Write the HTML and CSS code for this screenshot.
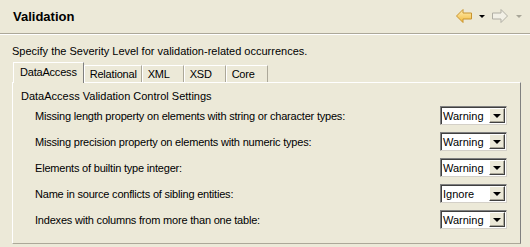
FILE: index.html
```html
<!DOCTYPE html>
<html>
<head>
<meta charset="utf-8">
<link rel="stylesheet" href="styles.css">
</head>
<body>
<div class="header">
  <div class="title">Validation</div>
  <div class="nav">
    <svg class="arrow" width="16" height="14" viewBox="0 0 16 14">
      <defs>
        <linearGradient id="gy" x1="0" y1="0" x2="0" y2="1">
          <stop offset="0" stop-color="#FFF0B8"/>
          <stop offset="1" stop-color="#F2B838"/>
        </linearGradient>
      </defs>
      <path d="M0.5 7 L7 0.5 V4 H15.5 V10 H7 V13.5 Z" fill="url(#gy)" stroke="#C89430" stroke-linejoin="round"/>
    </svg>
    <span class="drop dark"></span>
    <svg class="arrow" width="16" height="14" viewBox="0 0 16 14">
      <path d="M15.5 7 L9 0.5 V4 H0.5 V10 H9 V13.5 Z" fill="#F2F0E6" stroke="#B0AEA4" stroke-linejoin="round"/>
    </svg>
    <span class="drop light"></span>
  </div>
</div>
<div class="sep"></div>
<div class="content">
  <p class="desc">Specify the Severity Level for validation-related occurrences.</p>
  <div class="tabs">
    <div class="tab active">DataAccess</div>
    <div class="tab">Relational</div>
    <div class="tab">XML</div>
    <div class="tab">XSD</div>
    <div class="tab">Core</div>
  </div>
  <div class="panel">
    <div class="group">DataAccess Validation Control Settings</div>
    <div class="row"><span class="label">Missing length property on elements with string or character types:</span><div class="combo"><span class="value">Warning</span><span class="btn"><span class="tri"></span></span></div></div>
    <div class="row"><span class="label">Missing precision property on elements with numeric types:</span><div class="combo"><span class="value">Warning</span><span class="btn"><span class="tri"></span></span></div></div>
    <div class="row"><span class="label">Elements of builtin type integer:</span><div class="combo"><span class="value">Warning</span><span class="btn"><span class="tri"></span></span></div></div>
    <div class="row"><span class="label">Name in source conflicts of sibling entities:</span><div class="combo"><span class="value">Ignore</span><span class="btn"><span class="tri"></span></span></div></div>
    <div class="row"><span class="label">Indexes with columns from more than one table:</span><div class="combo"><span class="value">Warning</span><span class="btn"><span class="tri"></span></span></div></div>
  </div>
</div>
</body>
</html>
```

FILE: styles.css
```css
html, body {
  margin: 0;
  padding: 0;
  background: #ECE9D8;
  width: 530px;
  height: 247px;
  overflow: hidden;
  font-family: "Liberation Sans", Arial, sans-serif;
  font-size: 11px;
  color: #000;
}

.header {
  height: 33px;
  display: flex;
  align-items: center;
  justify-content: space-between;
  padding: 0 8px 0 13px;
  box-sizing: border-box;
}

.title {
  font-weight: bold;
  font-size: 13px;
  margin-top: -1px;
}

.nav {
  display: flex;
  align-items: center;
  margin-top: -1px;
}

.arrow {
  display: block;
}

.drop {
  width: 0;
  height: 0;
  border-left: 3px solid transparent;
  border-right: 3px solid transparent;
  margin: 1px 7px 0 7px;
}
.drop.dark { border-top: 3px solid #000; }
.drop.light { border-top: 3px solid #A8A698; margin-right: 0; margin-left: 8px; }

.sep {
  border-top: 1px solid #ACA899;
  border-bottom: 1px solid #FFFFFF;
}

.content {
  padding: 0 9px 0 12px;
}

.desc {
  margin: 0;
  padding-top: 10px;
  height: 17px;
  line-height: 13px;
}

.tabs {
  display: flex;
  align-items: flex-end;
  height: 20px;
  padding-left: 1px;
  position: relative;
  z-index: 1;
  letter-spacing: -0.2px;
}

.tab {
  box-sizing: border-box;
  height: 17px;
  min-width: 42px;
  padding: 2px 4px 0 5px;
  border-top: 1px solid #FFFFFF;
  border-left: 1px solid #FFFFFF;
  border-right: 1px solid #ACA899;
  line-height: 13px;
}

.tab.active {
  height: 21px;
  margin-bottom: -1px;
  padding: 3px 6px 0 6px;
  background: #ECE9D8;
  border-right: 1px solid #808080;
}

.panel {
  box-sizing: border-box;
  height: 162px;
  border-top: 1px solid #FFFFFF;
  border-left: 1px solid #FFFFFF;
  border-right: 1px solid #808080;
  border-bottom: 1px solid #ACA899;
  padding: 7px 13px 0 8px;
}

.group {
  line-height: 13px;
  height: 16px;
}

.row {
  display: flex;
  align-items: center;
  justify-content: space-between;
  height: 19px;
  margin-top: 7px;
  padding-left: 14px;
}

.group + .row { margin-top: 0; }

.label {
  letter-spacing: -0.2px;
}

.combo {
  box-sizing: border-box;
  width: 67px;
  height: 19px;
  background: #FFFFFF;
  border-top: 1px solid #808080;
  border-left: 1px solid #808080;
  border-right: 1px solid #D4D0C8;
  border-bottom: 1px solid #D4D0C8;
  box-shadow: inset 1px 1px 0 #404040;
  display: flex;
  align-items: center;
  justify-content: space-between;
  padding: 1px 1px 1px 2px;
}

.value {
  line-height: 13px;
  padding-top: 1px;
}

.btn {
  box-sizing: border-box;
  width: 16px;
  height: 15px;
  background: #ECE9D8;
  border-top: 1px solid #FFFFFF;
  border-left: 1px solid #FFFFFF;
  border-right: 1px solid #404040;
  border-bottom: 1px solid #404040;
  box-shadow: inset -1px -1px 0 #ACA899;
  display: flex;
  align-items: center;
  justify-content: center;
}

.tri {
  width: 0;
  height: 0;
  border-left: 4px solid transparent;
  border-right: 4px solid transparent;
  border-top: 4px solid #000;
  margin-top: 1px;
}
```
